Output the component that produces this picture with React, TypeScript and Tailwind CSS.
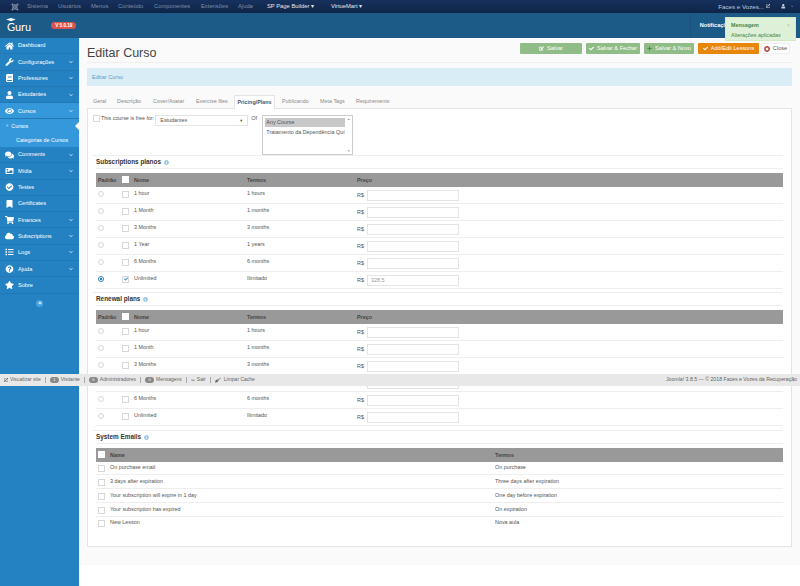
import type { ReactNode } from 'react';
import {
  FaBook, FaBookmark, FaCheck, FaCheckCircle, FaChevronDown, FaCloud, FaComments, FaEye, FaHome, FaImage,
  FaInfoCircle, FaJoomla, FaList, FaPlus, FaQuestionCircle, FaShoppingCart, FaStar, FaTimesCircle, FaUser,
  FaWrench, FaExternalLinkAlt, FaAngleDoubleLeft, FaEdit, FaBroom, FaMinus,
} from 'react-icons/fa';

const topLinks = [
  ['Sistema', 'w-[31px]'],
  ['Usuários', 'w-[33px]'],
  ['Menus', 'w-[27px]'],
  ['Conteúdo', 'w-[36px]'],
  ['Componentes', 'w-[47px]'],
  ['Extensões', 'w-[37px]'],
  ['Ajuda', 'w-[29px]'],
];

const menu = [
  { label: 'Dashboard', icon: FaHome },
  { label: 'Configurações', icon: FaWrench, more: true },
  { label: 'Professores', icon: FaBook, more: true },
  { label: 'Estudantes', icon: FaUser, more: true },
  { label: 'Cursos', icon: FaEye, more: true, active: true },
];

const menuAfter = [
  { label: 'Comments', icon: FaComments, more: true },
  { label: 'Mídia', icon: FaImage, more: true },
  { label: 'Testes', icon: FaCheckCircle },
  { label: 'Certificates', icon: FaBookmark },
  { label: 'Finances', icon: FaShoppingCart, more: true },
  { label: 'Subscriptions', icon: FaCloud, more: true },
  { label: 'Logs', icon: FaList, more: true },
  { label: 'Ajuda', icon: FaQuestionCircle, more: true },
  { label: 'Sobre', icon: FaStar },
];

const tabs = [
  ['Geral', 'w-[24px]'],
  ['Descrição', 'w-[36px]'],
  ['Cover/Avatar', 'w-[43px]'],
  ['Exercise files', 'w-[38px]'],
];

const tabsAfter = [
  ['Publicando', 'w-[38px]'],
  ['Meta Tags', 'w-[36px]'],
  ['Requirements', 'w-[40px]'],
];

const subscriptionPlans = [
  ['1 hour', '1 hours', ''],
  ['1 Month', '1 months', ''],
  ['3 Months', '3 months', ''],
  ['1 Year', '1 years', ''],
  ['6 Months', '6 months', ''],
  ['Unlimited', 'Ilimitado', '328.5'],
];

const renewalPlans = [
  ['1 hour', '1 hours', ''],
  ['1 Month', '1 months', ''],
  ['3 Months', '3 months', ''],
  ['1 Year', '1 years', ''],
  ['6 Months', '6 months', ''],
  ['Unlimited', 'Ilimitado', ''],
];

const emails = [
  ['On purchase email', 'On purchase'],
  ['3 days after expiration', 'Three days after expiration'],
  ['Your subscription will expire in 1 day', 'One day before expiration'],
  ['Your subscription has expired', 'On expiration'],
  ['New Lesson', 'Nova aula'],
];

function MenuItem({ item }: { item: { label: string; icon: any; more?: boolean; active?: boolean } }) {
  const Icon = item.icon;
  return (
    <div className={`flex h-[16.3px] items-center border-b border-[#2178b3] pl-[5px] pr-[6px] text-[5.6px] text-white ${item.active ? 'bg-[#3498db]' : ''}`}>
      <Icon className="w-[9px] shrink-0 text-[8px]" />
      <span className="ml-[4px] flex-1">{item.label}</span>
      {item.more && <FaChevronDown className="text-[4px] text-[#cfe5f5]" />}
    </div>
  );
}

function Box({ checked }: { checked?: boolean }) {
  return (
    <span className="flex h-[7px] w-[7px] items-center justify-center border border-[#d8d8d8] bg-white text-[4px] text-[#2a7fc0]">
      {checked && <FaCheck />}
    </span>
  );
}

function Separator() {
  return <span className="mx-[4px] h-[6px] w-px bg-[#aaaaaa]" />;
}

function Pill({ n }: { n: string }) {
  return (
    <span className="flex h-[6px] w-[9px] items-center justify-center rounded-full bg-[#888888] text-[4px] text-white">{n}</span>
  );
}

function Heading({ title }: { title: string }) {
  return (
    <div className="-ml-[3px] h-[18px] border-t border-[#eeeeee] pl-[3px]">
      <div className="flex h-[13px] items-center gap-[3px] border-b border-[#eeeeee] text-[6.4px] font-bold text-[#333333]">
        {title}
        <FaInfoCircle className="text-[5px] text-[#9cc7e4]" />
      </div>
    </div>
  );
}

function PlansTable({ plans, checkedLast }: { plans: string[][]; checkedLast?: boolean }) {
  return (
    <div>
      <div className="grid h-[13.5px] grid-cols-[24px_12px_113px_110px_1fr] items-center bg-[#999999] pl-[2px] text-[5.4px] font-bold text-[#444444]">
        <span>Padrão</span>
        <span className="h-[7px] w-[7px] bg-white" />
        <span>Nome</span>
        <span>Termos</span>
        <span>Preço</span>
      </div>
      {plans.map((plan, i) => {
        const on = checkedLast && i === plans.length - 1;
        return (
          <div
            key={plan[0]}
            className="grid h-[17.1px] grid-cols-[24px_12px_113px_110px_1fr] items-start border-b border-[#eeeeee] pl-[2px] pt-[3px] text-[5.4px] leading-[7px] text-[#555555]"
          >
            <span className={`mt-[1px] h-[6px] w-[6px] rounded-full border ${on ? 'border-[#2a7fc0] bg-[radial-gradient(circle,#2a7fc0_45%,#ffffff_55%)]' : 'border-[#d8d8d8] bg-white'}`} />
            <span className="mt-[1px]"><Box checked={on} /></span>
            <span>{plan[0]}</span>
            <span>{plan[1]}</span>
            <span className="flex items-center">
              <span className="w-[10px]">R$</span>
              <span className="flex h-[11px] w-[92px] items-center border border-[#e4e4e4] bg-white pl-[3px] text-[#999999]">{plan[2]}</span>
            </span>
          </div>
        );
      })}
    </div>
  );
}

function ActionButton({ className, icon, children }: { className: string; icon: ReactNode; children: ReactNode }) {
  return (
    <div className={`flex h-[11px] items-center justify-center gap-[3px] rounded-[1px] text-[5.6px] ${className}`}>
      {icon}
      {children}
    </div>
  );
}

export default function App() {
  return (
    <div className="relative flex h-[586px] w-[800px] flex-col overflow-hidden bg-white font-['Liberation_Sans',Arial,sans-serif]">
      <div className="flex h-[13px] items-center bg-gradient-to-b from-[#17315e] to-[#0e2548] text-[5.8px] text-[#7f8ea6]">
        <FaJoomla className="ml-[10px] mr-[7px] w-[10px] text-[8px]" />
        {topLinks.map(([label, width]) => (
          <span key={label} className={width}>{label}</span>
        ))}
        <span className="w-[64px] text-[#e2e7ef]">SP Page Builder ▾</span>
        <span className="text-[#e2e7ef]">VirtueMart ▾</span>
        <span className="ml-auto flex items-center text-[6.2px] text-[#c3ccda]">
          Faces e Vozes...
          <FaExternalLinkAlt className="ml-[2px] text-[4px]" />
          <FaUser className="ml-[11px] text-[4.5px]" />
          <FaChevronDown className="ml-[5px] mr-[7px] text-[2.5px]" />
        </span>
      </div>

      <div className="flex h-[25px] items-center bg-[#1c5a87] text-white">
        <span className="relative ml-[7px] mt-[2px] font-['Lato',sans-serif] text-[11px] leading-none">
          <svg viewBox="0 0 12 5" className="absolute -top-[3px] -left-[1px] h-[4px] w-[10px]" fill="currentColor">
            <path d="M6 0 12 2 6 4 0 2z" />
          </svg>
          Guru
        </span>
        <span className="ml-[20px] -mt-[1px] rounded-full bg-[#d9534f] px-[4px] py-[1px] text-[4.6px] font-bold leading-[5px]">V 5.0.19</span>
        <span className="ml-auto mr-[67px] h-[25px] border-l border-[#1a527b] pl-[9px] text-[5.6px] font-bold leading-[25px]">Notificações</span>
      </div>

      <div className="flex flex-1">
        <aside className="w-[79px] bg-[#2482c2]">
          {menu.map((item) => (
            <MenuItem key={item.label} item={item} />
          ))}
          <div className="relative bg-[#3498db] text-[5.4px] text-white">
            <div className="flex h-[14px] items-center pl-[6px]">
              <span className="mr-[3px] text-[4px]">»</span>Cursos
            </div>
            <div className="flex h-[13.5px] items-center pl-[16px]">Categorias de Cursos</div>
            <span className="absolute right-0 top-[3px] h-0 w-0 border-y-[4px] border-r-[4px] border-y-transparent border-r-[#fafafa]" />
          </div>
          {menuAfter.map((item) => (
            <MenuItem key={item.label} item={item} />
          ))}
          <div className="mt-[6px] flex justify-center">
            <span className="flex h-[7px] w-[7px] items-center justify-center rounded-full bg-[#4aa3df] text-[4px] text-white">
              <FaAngleDoubleLeft />
            </span>
          </div>
        </aside>

        <main className="h-[527px] flex-1 bg-[#fafafa] px-[8px] pt-[5px]">
          <div className="flex h-[20px] items-start justify-between border-b border-[#f0f0f0]">
            <h1 className="mt-[3px] text-[12.5px] leading-[14px] text-[#444444]">Editar Curso</h1>
            <div className="mr-[2px] flex gap-[4px]">
              <ActionButton className="w-[62px] bg-[#8fbc87] text-white" icon={<FaEdit className="text-[5px]" />}>Salvar</ActionButton>
              <ActionButton className="w-[54px] bg-[#8fbc87] text-white" icon={<FaCheck className="text-[5px]" />}>Salvar &amp; Fechar</ActionButton>
              <ActionButton className="w-[50px] bg-[#8fbc87] text-white" icon={<FaPlus className="text-[5px] text-[#3f8f3f]" />}>Salvar &amp; Novo</ActionButton>
              <ActionButton className="w-[61px] bg-[#e8860c] text-white" icon={<FaCheck className="text-[5px]" />}>Add/Edit Lessons</ActionButton>
              <ActionButton className="-ml-[2px] w-[29px] border border-[#eeeeee] bg-white text-[#555555]" icon={<FaTimesCircle className="text-[6px] text-[#b04040]" />}>Close</ActionButton>
            </div>
          </div>

          <div className="mt-[5px] flex h-[18px] items-center bg-[#d9edf7] pl-[5px] text-[5.6px] text-[#5a9fc0]">Editar Curso</div>

          <div className="mt-[9px] flex h-[13px] items-end pl-[6px] text-[5.4px] text-[#8a8a8a]">
            {tabs.map(([label, width]) => (
              <span key={label} className={`${width} pb-[3px]`}>{label}</span>
            ))}
            <span className="-mb-[1px] flex h-[14px] w-[41px] items-center justify-center border border-b-0 border-[#e4e4e4] bg-white font-bold text-[#555555]">Pricing/Plans</span>
            <span className="w-[7px]" />
            {tabsAfter.map(([label, width]) => (
              <span key={label} className={`${width} pb-[3px]`}>{label}</span>
            ))}
          </div>

          <section className="h-[439px] border border-[#e4e4e4] bg-white pl-[8px] pr-[8px]">
            <div className="-ml-[3px] flex h-[46px] items-start pt-[6px] text-[5.4px] text-[#555555]">
              <Box />
              <span className="ml-[1px] leading-[7px]">This course is free for:</span>
              <div className="ml-[1px] flex h-[11px] w-[93px] items-center justify-between border border-[#e4e4e4] px-[4px]">
                Estudantes<span className="text-[4px]">▼</span>
              </div>
              <span className="ml-[3px] w-[11px] leading-[7px]">Of</span>
              <div className="relative h-[40px] w-[91px] border border-[#cccccc] px-[2px] pt-[2px]">
                <div className="w-[80px] bg-[#c8c8c8] pl-[1px] leading-[9px]">Any Course</div>
                <div className="mt-[1px] whitespace-nowrap pl-[1px] leading-[9px]">Tratamento da Dependência Quí</div>
                <span className="absolute right-[2px] top-[1px] text-[3px] leading-[4px] text-[#888888]">▲</span>
                <span className="absolute bottom-[1px] right-[2px] text-[3px] leading-[4px] text-[#888888]">▼</span>
              </div>
            </div>

            <Heading title="Subscriptions planos" />
            <PlansTable plans={subscriptionPlans} checkedLast />

            <div className="mt-[3px]">
              <Heading title="Renewal plans" />
            </div>
            <PlansTable plans={renewalPlans} />

            <div className="mt-[4px]">
              <Heading title="System Emails" />
            </div>
            <div className="grid h-[13.5px] grid-cols-[12px_385px_1fr] items-center bg-[#999999] pl-[2px] text-[5.4px] font-bold text-[#444444]">
              <span className="h-[7px] w-[7px] bg-white" />
              <span>Name</span>
              <span>Termos</span>
            </div>
            {emails.map(([name, term]) => (
              <div key={name} className="grid h-[13.8px] grid-cols-[12px_385px_1fr] items-start border-b border-[#eeeeee] pl-[2px] pt-[2.5px] text-[5.4px] leading-[7px] text-[#555555] last:border-b-0">
                <span className="mt-[1px]"><Box /></span>
                <span>{name}</span>
                <span>{term}</span>
              </div>
            ))}
          </section>
        </main>
      </div>

      <div className="absolute left-0 right-0 top-[374px] flex h-[12px] items-center bg-[#e8e8e8] pl-[4px] pr-[3px] text-[5px] text-[#666666]">
        <FaExternalLinkAlt className="text-[4px]" />
        <span className="ml-[2px]">Visualizar site</span>
        <Separator />
        <Pill n="1" />
        <span className="ml-[2px]">Visitante</span>
        <Separator />
        <Pill n="0" />
        <span className="ml-[2px]">Administradores</span>
        <Separator />
        <Pill n="0" />
        <span className="ml-[2px]">Mensagens</span>
        <Separator />
        <FaMinus className="text-[4px]" />
        <span className="ml-[2px]">Sair</span>
        <Separator />
        <FaBroom className="text-[6px]" />
        <span className="ml-[3px]">Limpar Cache</span>
        <span className="ml-auto text-[5.2px]">Joomla! 3.8.5 — © 2018 Faces e Vozes da Recuperação</span>
      </div>

      <div className="absolute left-[725px] top-[17px] h-[24px] w-[71px] border border-[#d6e9c6] bg-[#dff0d8] px-[5px] pt-[3px] text-[5.4px] text-[#468847]">
        <div className="flex items-center justify-between font-bold">
          Mensagem
          <span className="font-normal text-[#b5c9ad]">×</span>
        </div>
        <div className="mt-[2px]">Alterações aplicadas</div>
      </div>
    </div>
  );
}
